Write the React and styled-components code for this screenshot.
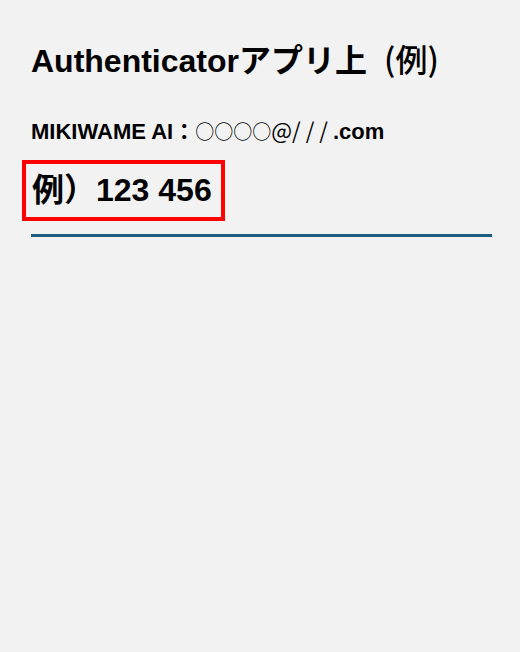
import React from 'react';
import styled, { createGlobalStyle } from 'styled-components';

const GlobalStyle = createGlobalStyle`
  html, body {
    margin: 0;
    padding: 0;
    background: #f2f2f2;
  }
  body {
    font-family: "Liberation Sans", "Noto Sans CJK JP", sans-serif;
    color: #000;
  }
`;

const Page = styled.div`
  min-height: 652px;
  padding: 41px 28px 0 31px;
  box-sizing: border-box;
`;

const Title = styled.h1`
  margin: 0;
  font-size: 32px;
  font-weight: 700;
  line-height: 40px;
`;

const Paren = styled.span`
  margin-left: 17px;
  font-family: "Noto Sans CJK JP", sans-serif;
  font-weight: 500;
  line-height: 1;
`;

const Account = styled.div`
  margin-top: 36px;
  font-size: 22px;
  font-weight: 700;
  line-height: 30px;
`;

const Thin = styled.span`
  font-family: "Noto Sans CJK JP", sans-serif;
  font-weight: 400;
  font-size: ${(p) => p.$size || 22}px;
  letter-spacing: ${(p) => p.$spacing || 0}px;
  line-height: 1;
`;

const CodeBox = styled.div`
  width: fit-content;
  margin: 13px 0 0 -9px;
  padding: 0 9px 0 6px;
  border: 4px solid #ff0000;
  font-size: 32px;
  font-weight: 700;
  line-height: 53px;
`;

const Underline = styled.div`
  margin-top: 13px;
  height: 3px;
  background: #1b5d83;
`;

export default function App() {
  return (
    <>
      <GlobalStyle />
      <Page>
        <Title>
          Authenticatorアプリ上<Paren>(例)</Paren>
        </Title>
        <Account>
          MIKIWAME AI：<Thin $size={19}>○○○○</Thin>
          <Thin>@</Thin>
          <Thin $spacing={5}>///</Thin>.com
        </Account>
        <CodeBox>例）123 456</CodeBox>
        <Underline />
      </Page>
    </>
  );
}
